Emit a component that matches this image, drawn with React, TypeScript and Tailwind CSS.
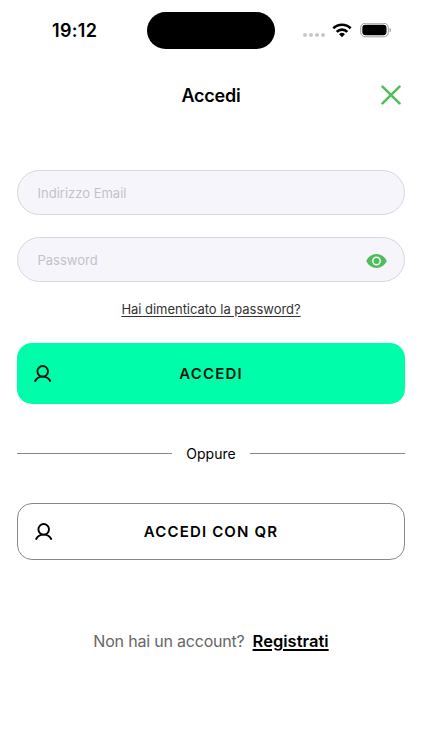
import type { ReactNode } from "react";

function UserIcon() {
  return (
    <svg className="h-[18px] w-[18px]" viewBox="0 0 18 18" fill="none" stroke="currentColor" strokeWidth="1.9" strokeLinecap="round">
      <circle cx="8.7" cy="6.3" r="5.3" />
      <path d="M1.2 16c1.3-2.7 4-4.4 7.5-4.4s6.2 1.7 7.5 4.4" />
    </svg>
  );
}

function StatusBar() {
  return (
    <header className="flex h-[60px] items-center pl-[52px]">
      <span className="w-[95px] text-[18px] font-semibold tracking-[0.3px]">19:12</span>
      <div className="mt-px h-[37.5px] w-[128px] rounded-full bg-black" />
      <div className="ml-7 flex gap-[2px] pt-[9px]">
        {[0, 1, 2, 3].map((dot) => (
          <span key={dot} className="h-1 w-1 rounded-full bg-[#c9c9c9]" />
        ))}
      </div>
      <svg className="ml-[7px] h-[15px] w-5" viewBox="0 0 20 15">
        <path d="M1.3 5.3a12.5 12.5 0 0 1 17.4 0M4.7 8.8a7.5 7.5 0 0 1 10.6 0" fill="none" stroke="#000" strokeWidth="2.6" />
        <path d="M10 14.2 7.1 11.3a4.1 4.1 0 0 1 5.8 0z" />
      </svg>
      <svg className="ml-2 h-[15px] w-8" viewBox="0 0 32 15">
        <rect x=".7" y=".2" width="27.6" height="13.6" rx="4.5" fill="none" stroke="#999" />
        <rect x="2.3" y="1.8" width="24.2" height="10.4" rx="3.1" />
        <path d="M29.7 4.7c1.6.8 1.6 3.8 0 4.6z" fill="#888" />
      </svg>
    </header>
  );
}

function Field({ label, type, children }: { label: string; type: string; children?: ReactNode }) {
  return (
    <div className="flex h-[45px] items-center rounded-full border border-[#d7d7dc] bg-[#f6f5fb] pr-[17px] pl-[19.5px]">
      <input
        type={type}
        placeholder={label}
        className="min-w-0 flex-1 bg-transparent pt-[2px] text-[13px] outline-none placeholder:text-[#c3c3c7]"
      />
      {children}
    </div>
  );
}

export default function App() {
  return (
    <div className="h-[750px] w-full overflow-hidden bg-white font-['Inter',sans-serif] text-black">
      <StatusBar />

      <div className="flex h-[70px] items-center justify-between px-[21px]">
        <span className="w-5" />
        <h1 className="text-[18px] font-semibold tracking-[-0.2px]">Accedi</h1>
        <button aria-label="Chiudi" className="text-[#4fbd5b]">
          <svg className="h-5 w-5" viewBox="0 0 20 20" stroke="currentColor" strokeWidth="2.5" strokeLinecap="round">
            <path d="M1.5 1.6l17 16.8M18.5 1.6l-17 16.8" />
          </svg>
        </button>
      </div>

      <main className="px-[17px] pt-10">
        <div className="flex flex-col gap-[22px]">
          <Field label="Indirizzo Email" type="email" />
          <Field label="Password" type="password">
            <button aria-label="Mostra password" className="pt-[2px] text-[#4fbd5b]">
              <svg className="h-[14px] w-[21px]" viewBox="0 0 21 14" fill="currentColor">
                <path d="M10.5 0C6 0 1.9 2.9.3 7c1.6 4.1 5.7 7 10.2 7s8.6-2.9 10.2-7C19.1 2.9 15 0 10.5 0z" />
                <circle cx="10.5" cy="7" r="3.7" fill="none" stroke="#f6f5fb" strokeWidth="1.5" />
              </svg>
            </button>
          </Field>
        </div>

        <div className="flex h-[61px] items-center justify-center pb-[6px]">
          <a href="#" className="text-[13px] tracking-[-0.03px] text-[#333] underline underline-offset-2">
            Hai dimenticato la password?
          </a>
        </div>

        <button className="flex h-[61px] w-full items-center rounded-[15px] bg-[#00fdaa] px-[17px] text-[#04150d]">
          <UserIcon />
          <span className="flex-1 pt-px pr-[18px] text-center text-[15px] font-semibold tracking-[1.15px]">ACCEDI</span>
        </button>

        <div className="flex h-[99px] items-center gap-[14px]">
          <span className="h-px flex-1 bg-[#888]" />
          <span className="text-[14px]">Oppure</span>
          <span className="h-px flex-1 bg-[#888]" />
        </div>

        <button className="flex h-[57px] w-full items-center rounded-[15px] border border-[#888] px-[17px]">
          <UserIcon />
          <span className="flex-1 pt-px pr-[18px] text-center text-[15px] font-semibold tracking-[1.15px]">ACCEDI CON QR</span>
        </button>

        <p className="mt-[69px] flex items-center justify-center gap-2 text-[16px] tracking-[-0.2px] text-[#666]">
          Non hai un account?
          <a href="#" className="text-[16.5px] font-semibold tracking-[0.02px] text-black underline decoration-[1.5px] underline-offset-2">
            Registrati
          </a>
        </p>
      </main>
    </div>
  );
}
